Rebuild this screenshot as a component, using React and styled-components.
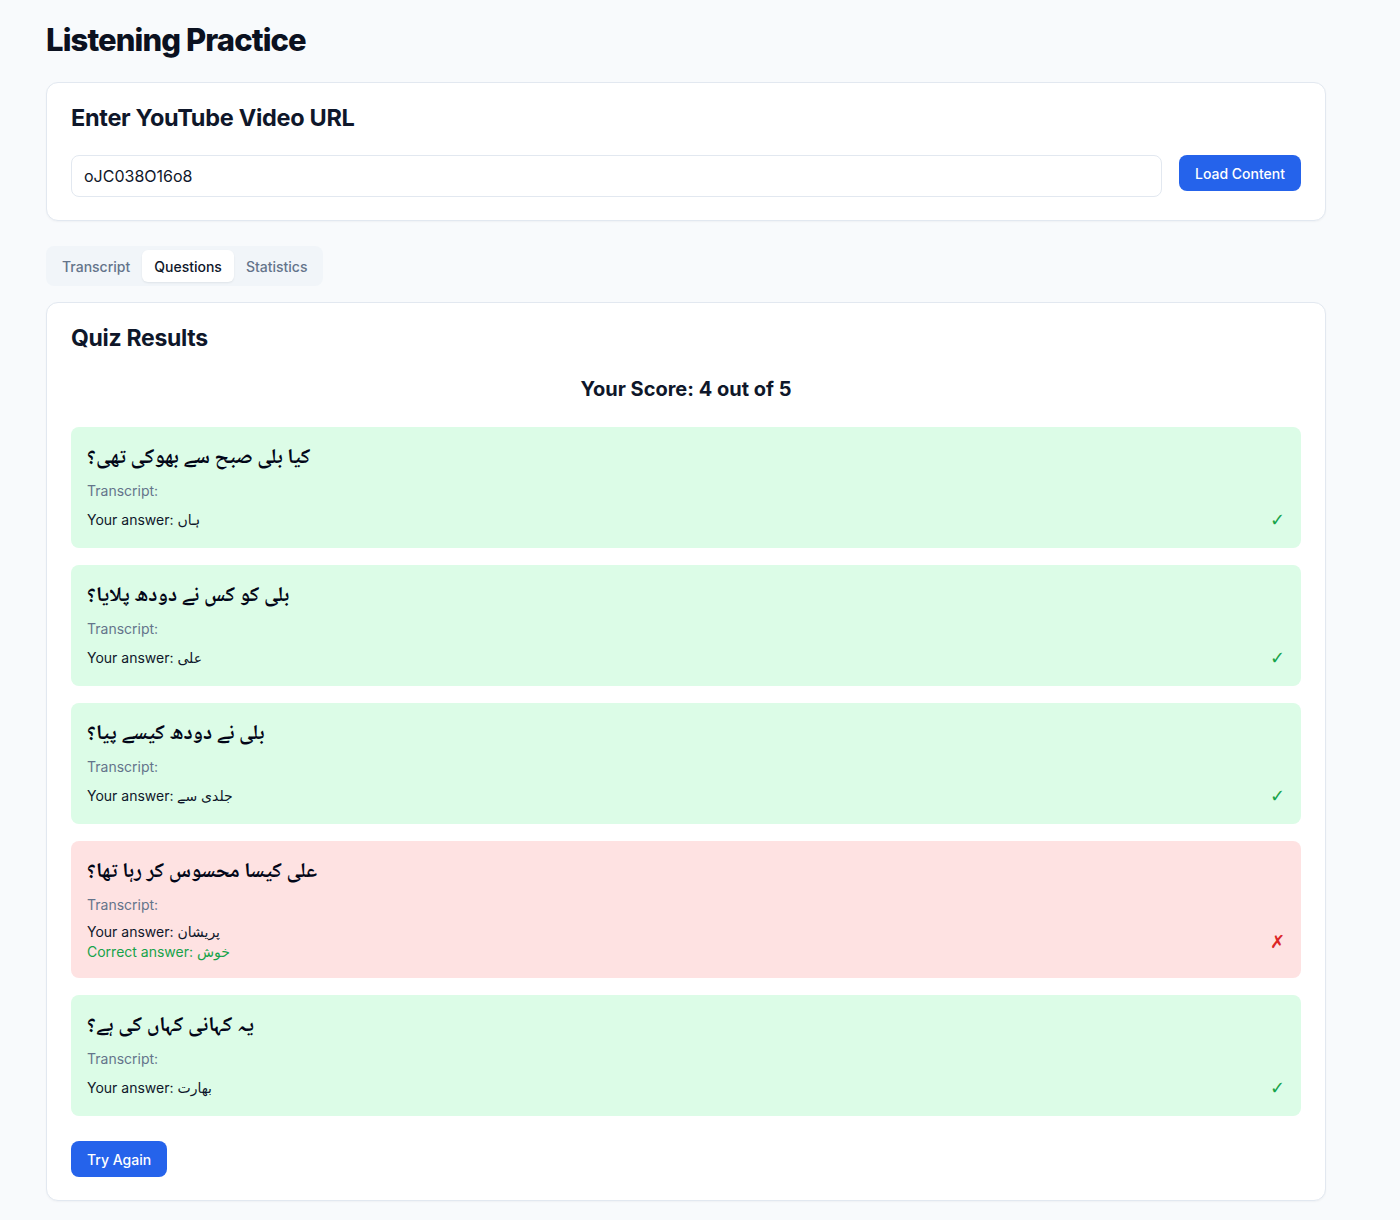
import styled, { createGlobalStyle } from "styled-components";

const GlobalStyle = createGlobalStyle`
  * { box-sizing: border-box; }
  body {
    margin: 0;
    background: #f8fafc;
    font-family: Inter, "Noto Sans", "DejaVu Sans", sans-serif;
    color: #0f172a;
  }
`;

const Page = styled.main`
  width: 1326px;
  padding: 22px 0 18px 46px;
`;

const Title = styled.h1`
  margin: 0 0 24px;
  font-size: 31px;
  line-height: 36px;
  font-weight: 800;
  letter-spacing: -0.9px;
  color: #0b1120;
`;

const Card = styled.section`
  background: #fff;
  border: 1px solid #e2e8f0;
  border-radius: 12px;
  padding: 23px 24px;
  box-shadow: 0 1px 2px rgba(15, 23, 42, 0.04);
`;

const CardTitle = styled.h2`
  margin: 0 0 ${(p) => p.$gap || 0}px;
  font-size: ${(p) => p.$size || 24}px;
  line-height: 24px;
  font-weight: 700;
  letter-spacing: -0.3px;
`;

const UrlRow = styled.div`
  display: flex;
  align-items: flex-start;
  gap: 17px;
`;

const UrlInput = styled.input`
  flex: 1;
  height: 42px;
  border: 1px solid #e2e8f0;
  border-radius: 8px;
  padding: 0 12px;
  font-family: inherit;
  font-size: 16px;
  color: #0f172a;
  outline: none;
`;

const Button = styled.button`
  height: 36px;
  padding: 0 16px;
  border: none;
  border-radius: 8px;
  background: #2563eb;
  color: #fff;
  font-family: inherit;
  font-size: 14px;
  font-weight: 500;
  cursor: pointer;
  margin-top: ${(p) => p.$mt || 0}px;
`;

const Tabs = styled.div`
  display: inline-flex;
  margin: 25px 0 16px;
  padding: 4px;
  background: #f1f5f9;
  border-radius: 8px;
`;

const Tab = styled.button`
  height: 32px;
  padding: 0 12px;
  border: none;
  border-radius: 6px;
  font-family: inherit;
  font-size: 14px;
  font-weight: 500;
  background: ${(p) => (p.$active ? "#fff" : "transparent")};
  color: ${(p) => (p.$active ? "#0f172a" : "#64748b")};
  box-shadow: ${(p) => (p.$active ? "0 1px 2px rgba(15,23,42,0.08)" : "none")};
`;

const Score = styled.p`
  margin: 25px 0 24px;
  text-align: center;
  font-size: 20px;
  line-height: 28px;
  font-weight: 700;
`;

const List = styled.div`
  display: flex;
  flex-direction: column;
  gap: 17px;
`;

const Item = styled.div`
  background: ${(p) => (p.$correct ? "#dcfce7" : "#fee2e2")};
  border-radius: 8px;
  padding: 16px;
`;

const Question = styled.div`
  font-family: "Noto Naskh Arabic", "Noto Sans Arabic", "DejaVu Sans", sans-serif;
  font-size: 21px;
  line-height: 32px;
  height: 32px;
  font-weight: 700;
  text-align: left;
  color: #020617;
`;

const Muted = styled.div`
  margin-top: 6px;
  font-size: 14px;
  line-height: 20px;
  color: #64748b;
`;

const AnswerRow = styled.div`
  margin-top: 7px;
  display: flex;
  align-items: center;
  justify-content: space-between;
`;

const Answer = styled.div`
  font-size: 14px;
  line-height: 20px;
  color: ${(p) => (p.$good ? "#16a34a" : "#0f172a")};
`;

const Mark = styled.span`
  font-family: "DejaVu Sans", sans-serif;
  font-size: 18px;
  line-height: 24px;
  color: ${(p) => (p.$correct ? "#16a34a" : "#dc2626")};
`;

const results = [
  { q: "کیا بلی صبح سے بھوکی تھی؟", a: "ہاں", ok: true },
  { q: "بلی کو کس نے دودھ پلایا؟", a: "علی", ok: true },
  { q: "بلی نے دودھ کیسے پیا؟", a: "جلدی سے", ok: true },
  { q: "علی کیسا محسوس کر رہا تھا؟", a: "پریشان", ok: false, right: "خوش" },
  { q: "یہ کہانی کہاں کی ہے؟", a: "بھارت", ok: true },
];

export default function App() {
  return (
    <>
      <GlobalStyle />
      <Page>
        <Title>Listening Practice</Title>
        <Card>
          <CardTitle $gap={25} $size={23.5}>Enter YouTube Video URL</CardTitle>
          <UrlRow>
            <UrlInput defaultValue="oJC038O16o8" />
            <Button>Load Content</Button>
          </UrlRow>
        </Card>
        <Tabs>
          <Tab>Transcript</Tab>
          <Tab $active>Questions</Tab>
          <Tab>Statistics</Tab>
        </Tabs>
        <Card>
          <CardTitle $size={23}>Quiz Results</CardTitle>
          <Score>Your Score: 4 out of 5</Score>
          <List>
            {results.map((r) => (
              <Item key={r.q} $correct={r.ok}>
                <Question dir="rtl">{r.q}</Question>
                <Muted>Transcript:</Muted>
                <AnswerRow>
                  <div>
                    <Answer>Your answer: {r.a}</Answer>
                    {r.right && <Answer $good>Correct answer: {r.right}</Answer>}
                  </div>
                  <Mark $correct={r.ok}>{r.ok ? "✓" : "✗"}</Mark>
                </AnswerRow>
              </Item>
            ))}
          </List>
          <Button $mt={25}>Try Again</Button>
        </Card>
      </Page>
    </>
  );
}
